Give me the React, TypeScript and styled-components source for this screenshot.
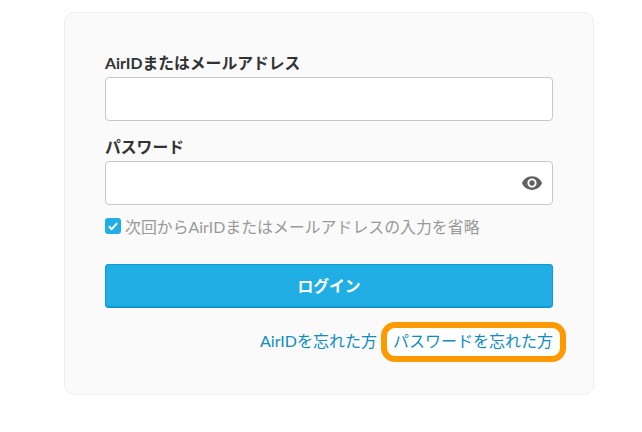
import React from 'react';
import styled, { createGlobalStyle } from 'styled-components';

const GlobalStyle = createGlobalStyle`
  html, body {
    margin: 0;
    padding: 0;
    background: #fff;
    font-family: Lato, 'Noto Sans CJK JP', sans-serif;
  }
`;

const Page = styled.div`
  width: 642px;
  height: 432px;
  box-sizing: border-box;
  padding: 12px 48px 0 64px;
  overflow: hidden;
`;

const Card = styled.form`
  box-sizing: border-box;
  width: 530px;
  height: 383px;
  padding: 38px 40px 0;
  background: #fafafa;
  border: 1px solid #efefef;
  border-radius: 10px;
`;

const Field = styled.div`
  display: flex;
  flex-direction: column;
  margin-bottom: 14px;
`;

const Label = styled.label`
  height: 26px;
  line-height: 23px;
  font-size: 15.8px;
  font-weight: 700;
  color: #333;
`;

const InputWrap = styled.div`
  position: relative;
  display: flex;
`;

const Input = styled.input`
  box-sizing: border-box;
  width: 448px;
  height: 44px;
  padding: 0 12px;
  background: #fff;
  border: 1px solid #c8c8c8;
  border-radius: 4px;
  outline: none;
`;

const EyeIcon = styled.svg`
  position: absolute;
  right: 10px;
  top: 11px;
  width: 22px;
  height: 22px;
  fill: #616161;
`;

const RememberRow = styled.label`
  display: flex;
  align-items: center;
  gap: 4px;
  margin-top: -5px;
  height: 24px;
  font-size: 15.9px;
  color: #999;
`;

const CheckBox = styled.span`
  display: flex;
  align-items: center;
  justify-content: center;
  width: 16px;
  height: 16px;
  background: #20aee5;
  border-radius: 3px;
`;

const LoginButton = styled.button`
  display: block;
  box-sizing: border-box;
  width: 448px;
  height: 44px;
  margin-top: 26px;
  background: #20aee5;
  border: none;
  border-bottom: 1px solid #1193c9;
  box-shadow: inset 0 0 0 1px #149ad1;
  border-radius: 4px;
  color: #fff;
  font-family: inherit;
  font-size: 15.8px;
  font-weight: 700;
`;

const Links = styled.div`
  display: flex;
  justify-content: flex-end;
  gap: 16px;
  width: 448px;
  margin-top: 21px;
  line-height: 24px;
`;

const ForgotLink = styled.a`
  position: relative;
  z-index: 0;
  font-size: 16px;
  color: #0f8cc0;
  text-decoration: none;
`;

const Highlight = styled.span`
  position: absolute;
  z-index: -1;
  left: -12px;
  right: -13px;
  top: -7px;
  bottom: -9px;
  background: #fff;
  border: 6px solid #ff9900;
  border-radius: 14px;
`;

const App = () => {
  return (
    <Page>
      <GlobalStyle />
      <Card>
        <Field>
          <Label>AirIDまたはメールアドレス</Label>
          <Input type="text" />
        </Field>
        <Field>
          <Label>パスワード</Label>
          <InputWrap>
            <Input type="password" />
            <EyeIcon viewBox="0 0 24 24">
              <path d="M12 4.5C7 4.5 2.73 7.61 1 12c1.73 4.39 6 7.5 11 7.5s9.27-3.11 11-7.5c-1.73-4.39-6-7.5-11-7.5zM12 17c-2.76 0-5-2.24-5-5s2.24-5 5-5 5 2.24 5 5-2.24 5-5 5zm0-8c-1.66 0-3 1.34-3 3s1.34 3 3 3 3-1.34 3-3-1.34-3-3-3z" />
            </EyeIcon>
          </InputWrap>
        </Field>
        <RememberRow>
          <CheckBox>
            <svg width="12" height="12" viewBox="0 0 12 12" fill="none">
              <path d="M1.8 6.2l2.9 2.9 5.5-6" stroke="#fff" strokeWidth="2" />
            </svg>
          </CheckBox>
          次回からAirIDまたはメールアドレスの入力を省略
        </RememberRow>
        <LoginButton type="button">ログイン</LoginButton>
        <Links>
          <ForgotLink href="#">AirIDを忘れた方</ForgotLink>
          <ForgotLink href="#">
            <Highlight />
            パスワードを忘れた方
          </ForgotLink>
        </Links>
      </Card>
    </Page>
  );
};

export default App;
